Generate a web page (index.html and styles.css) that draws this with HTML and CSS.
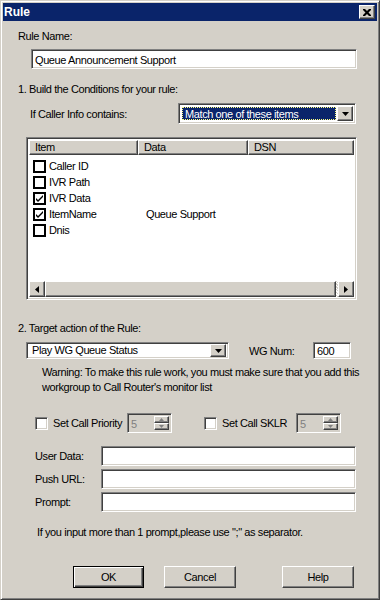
FILE: index.html
```html
<!DOCTYPE html>
<html>
<head>
    <title>Rule</title>
    <link rel="stylesheet" href="styles.css">
</head>
<body>
<div class="window">

    <div class="titleBar">
        <span class="titleText">Rule</span>
        <div class="closeButton raised">
            <svg width="8" height="7" viewBox="0 0 8 7"><path d="M0 0h2l2 2 2-2h2v1l-2.5 2.5L8 6v1H6L4 5 2 7H0V6l2.5-2.5L0 1z" fill="#000"/></svg>
        </div>
    </div>

    <div class="content">

        <div class="label ruleLabel">Rule Name:</div>
        <div class="field sunken ruleName">Queue Announcement Support</div>

        <div class="label stepLabel">1. Build the Conditions for your rule:</div>

        <div class="matchRow">
            <span class="matchLabel">If Caller Info contains:</span>
            <div class="combo sunken matchCombo">
                <span class="comboText selectedText">Match one of these items</span>
                <span class="dropButton raised">
                    <svg width="7" height="4" viewBox="0 0 7 4"><path d="M0 0h7L3.5 4z" fill="#000"/></svg>
                </span>
            </div>
        </div>

        <div class="listView sunken">
            <div class="listHeader">
                <div class="colHead raised colItem">Item</div>
                <div class="colHead raised colData">Data</div>
                <div class="colHead raised colDsn">DSN</div>
            </div>
            <div class="listBody">
                <div class="listRow">
                    <span class="listCheck"></span><span class="itemName">Caller ID</span>
                </div>
                <div class="listRow">
                    <span class="listCheck"></span><span class="itemName">IVR Path</span>
                </div>
                <div class="listRow">
                    <span class="listCheck">
                        <svg width="9" height="9" viewBox="0 0 9 9"><path d="M1 4l2 2 5-5v2L3 8 1 6z" fill="#000"/></svg>
                    </span><span class="itemName">IVR Data</span>
                </div>
                <div class="listRow">
                    <span class="listCheck">
                        <svg width="9" height="9" viewBox="0 0 9 9"><path d="M1 4l2 2 5-5v2L3 8 1 6z" fill="#000"/></svg>
                    </span><span class="itemName">ItemName</span><span>Queue Support</span>
                </div>
                <div class="listRow">
                    <span class="listCheck"></span><span class="itemName">Dnis</span>
                </div>
            </div>
            <div class="hScroll">
                <div class="scrollButton raised">
                    <svg width="4" height="7" viewBox="0 0 4 7"><path d="M4 0v7L0 3.5z" fill="#000"/></svg>
                </div>
                <div class="scrollThumb raised"></div>
                <div class="scrollTrack"></div>
                <div class="scrollButton raised">
                    <svg width="4" height="7" viewBox="0 0 4 7"><path d="M0 0v7L4 3.5z" fill="#000"/></svg>
                </div>
            </div>
        </div>

        <div class="label stepLabel step2">2. Target action of the Rule:</div>

        <div class="targetRow">
            <div class="combo sunken actionCombo">
                <span class="comboText">Play WG Queue Status</span>
                <span class="dropButton raised">
                    <svg width="7" height="4" viewBox="0 0 7 4"><path d="M0 0h7L3.5 4z" fill="#000"/></svg>
                </span>
            </div>
            <span class="wgLabel">WG Num:</span>
            <div class="field sunken wgNum">600</div>
        </div>

        <div class="warning">
            Warning: To make this rule work, you must make sure that you add this<br>
            workgroup to Call Router's monitor list
        </div>

        <div class="checkRow">
            <span class="checkBox sunken"></span>
            <span class="checkLabel">Set Call Priority</span>
            <div class="spin sunken">
                <span class="spinText">5</span>
                <div class="spinButtons">
                    <span class="spinButton raised"><svg width="5" height="3" viewBox="0 0 5 3"><path d="M2.5 0L5 3H0z" fill="#808080"/></svg></span>
                    <span class="spinButton raised"><svg width="5" height="3" viewBox="0 0 5 3"><path d="M0 0h5L2.5 3z" fill="#808080"/></svg></span>
                </div>
            </div>
            <span class="checkBox sunken secondCheck"></span>
            <span class="checkLabel">Set Call SKLR</span>
            <div class="spin sunken">
                <span class="spinText">5</span>
                <div class="spinButtons">
                    <span class="spinButton raised"><svg width="5" height="3" viewBox="0 0 5 3"><path d="M2.5 0L5 3H0z" fill="#808080"/></svg></span>
                    <span class="spinButton raised"><svg width="5" height="3" viewBox="0 0 5 3"><path d="M0 0h5L2.5 3z" fill="#808080"/></svg></span>
                </div>
            </div>
        </div>

        <div class="fieldRows">
            <div class="fieldRow">
                <span class="fieldLabel">User Data:</span>
                <div class="field sunken wideField"></div>
            </div>
            <div class="fieldRow">
                <span class="fieldLabel">Push URL:</span>
                <div class="field sunken wideField"></div>
            </div>
            <div class="fieldRow">
                <span class="fieldLabel">Prompt:</span>
                <div class="field sunken wideField"></div>
            </div>
        </div>

        <div class="label note">If you input more than 1 prompt,please use ";" as separator.</div>

        <div class="buttonRow">
            <div class="button defaultButton">OK</div>
            <div class="button raised">Cancel</div>
            <div class="button raised helpButton">Help</div>
        </div>

    </div>
</div>
</body>
</html>
```

FILE: styles.css
```css
body {
    margin: 0;
    font-family: "Liberation Sans", Arial, sans-serif;
    font-size: 11px;
    letter-spacing: -0.4px;
    color: #000;
}

/* Window frame */
.window {
    width: 380px;
    height: 600px;
    box-sizing: border-box;
    background-color: #d4d0c8;
    border: 1px solid;
    border-color: #d4d0c8 #404040 #404040 #d4d0c8;
    box-shadow: inset 1px 1px #fff, inset -1px -1px #808080;
    padding: 2px;
}

/* 3D edges */
.raised {
    box-sizing: border-box;
    background-color: #d4d0c8;
    border: 1px solid;
    border-color: #fff #404040 #404040 #fff;
    box-shadow: inset -1px -1px #808080;
}

.sunken {
    box-sizing: border-box;
    background-color: #fff;
    border: 1px solid;
    border-color: #808080 #fff #fff #808080;
    box-shadow: inset 1px 1px #404040, inset -1px -1px #d4d0c8;
}

/* Title bar */
.titleBar {
    height: 18px;
    background-color: #0a246a;
    display: flex;
    align-items: center;
    justify-content: space-between;
    padding: 0 2px 0 1px;
}

.titleText {
    color: white;
    font-weight: bold;
    font-size: 12px;
    letter-spacing: 0;
}

.closeButton {
    width: 16px;
    height: 14px;
    display: flex;
    align-items: center;
    justify-content: center;
}

/* Content */
.label {
    line-height: 13px;
    white-space: nowrap;
}

.ruleLabel {
    margin: 9px 0 0 15px;
}

.field {
    height: 20px;
    line-height: 16px;
    padding: 2px 3px;
    white-space: nowrap;
    overflow: hidden;
}

.ruleName {
    margin: 6px 0 0 28px;
    width: 326px;
}

.stepLabel {
    margin: 14px 0 0 15px;
}

.step2 {
    margin-top: 22px;
}

.matchRow {
    display: flex;
    align-items: center;
    margin: 7px 0 0 27px;
    height: 21px;
}

.matchLabel {
    width: 148px;
}

.combo {
    display: flex;
    align-items: stretch;
    padding: 2px;
}

.matchCombo {
    width: 178px;
    height: 21px;
}

.comboText {
    flex: 1;
    padding-left: 2px;
    line-height: 15px;
    white-space: nowrap;
}

.selectedText {
    background-color: #0a246a;
    color: white;
    margin: 1px;
    padding-left: 3px;
    outline: 1px dotted #ffff80;
    outline-offset: -1px;
}

.dropButton {
    width: 16px;
    display: flex;
    align-items: center;
    justify-content: center;
}

/* List view */
.listView {
    margin: 13px 0 0 23px;
    width: 331px;
    height: 163px;
    padding: 2px;
    display: flex;
    flex-direction: column;
}

.listHeader {
    display: flex;
    height: 15px;
}

.colHead {
    line-height: 13px;
    padding-left: 5px;
    white-space: nowrap;
}

.colItem {
    width: 109px;
}

.colData {
    width: 110px;
}

.colDsn {
    flex: 1;
}

.listBody {
    flex: 1;
    padding-top: 3px;
}

.listRow {
    display: flex;
    align-items: center;
    height: 16px;
    padding-left: 4px;
}

.listCheck {
    width: 13px;
    height: 13px;
    box-sizing: border-box;
    border: 2px solid #000;
    background: white;
    display: flex;
    align-items: center;
    justify-content: center;
    margin-right: 3px;
}

.itemName {
    width: 97px;
}

.hScroll {
    height: 16px;
    display: flex;
    background-color: #d4d0c8;
}

.scrollButton {
    width: 16px;
    display: flex;
    align-items: center;
    justify-content: center;
}

.scrollThumb {
    flex: 1;
}

.scrollTrack {
    width: 2px;
    background-image: repeating-linear-gradient(45deg, #fff 0 1px, #d4d0c8 1px 2px);
}

/* Target action */
.targetRow {
    display: flex;
    align-items: center;
    margin: 7px 0 0 23px;
    height: 17px;
}

.actionCombo {
    width: 203px;
    height: 17px;
    padding: 1px 2px;
}

.actionCombo .comboText {
    line-height: 13px;
    padding-left: 3px;
}

.wgLabel {
    margin-left: 20px;
    width: 64px;
}

.wgNum {
    width: 38px;
    height: 17px;
    line-height: 13px;
}

.warning {
    margin: 6px 0 0 39px;
    line-height: 15px;
    white-space: nowrap;
}

/* Checkboxes with spin boxes */
.checkRow {
    display: flex;
    align-items: center;
    margin: 18px 0 0 32px;
    height: 20px;
}

.checkBox {
    width: 13px;
    height: 13px;
}

.checkLabel {
    margin-left: 5px;
    width: 74px;
    white-space: nowrap;
}

.secondCheck {
    margin-left: 32px;
}

.spin {
    width: 45px;
    height: 20px;
    display: flex;
    background-color: #d4d0c8;
    padding: 2px;
}

.spinText {
    flex: 1;
    color: #808080;
    padding-left: 1px;
    line-height: 16px;
}

.spinButtons {
    display: flex;
    flex-direction: column;
    width: 15px;
}

.spinButton {
    flex: 1;
    display: flex;
    align-items: center;
    justify-content: center;
}

/* Text fields */
.fieldRows {
    margin: 13px 0 0 32px;
    display: flex;
    flex-direction: column;
    gap: 3px;
}

.fieldRow {
    display: flex;
    align-items: center;
}

.fieldLabel {
    width: 66px;
}

.wideField {
    width: 255px;
}

.note {
    margin: 14px 0 0 34px;
}

/* Buttons */
.buttonRow {
    display: flex;
    margin: 27px 0 0 70px;
}

.button {
    width: 72px;
    height: 22px;
    box-sizing: border-box;
    display: flex;
    align-items: center;
    justify-content: center;
    margin-right: 20px;
}

.defaultButton {
    width: 71px;
    background-color: #d4d0c8;
    border: 1px solid #000;
    box-shadow: inset 1px 1px #fff, inset -1px -1px #404040, inset -2px -2px #808080;
}

.helpButton {
    margin-left: 26px;
}
```
